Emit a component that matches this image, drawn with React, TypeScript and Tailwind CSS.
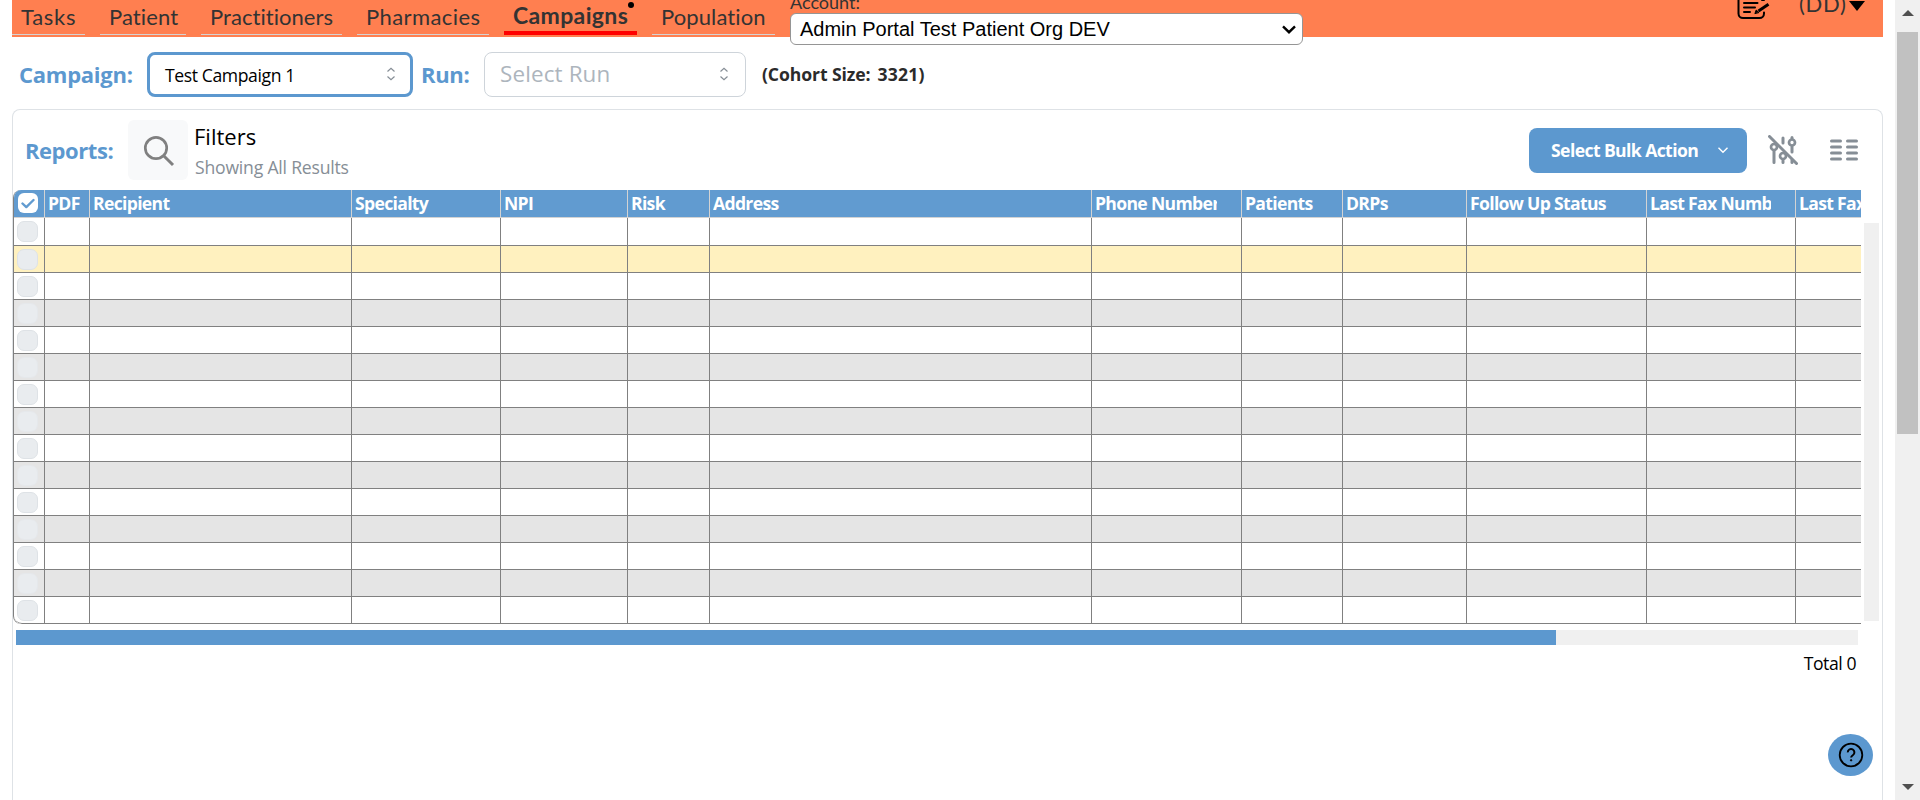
import type { ReactNode } from 'react';

const columns: { label: string; width: string }[] = [
  { label: 'PDF', width: 'w-[45px]' },
  { label: 'Recipient', width: 'w-[262px]' },
  { label: 'Specialty', width: 'w-[149px]' },
  { label: 'NPI', width: 'w-[127px]' },
  { label: 'Risk', width: 'w-[82px]' },
  { label: 'Address', width: 'w-[382px]' },
  { label: 'Phone Number', width: 'w-[150px]' },
  { label: 'Patients', width: 'w-[101px]' },
  { label: 'DRPs', width: 'w-[124px]' },
  { label: 'Follow Up Status', width: 'w-[180px]' },
  { label: 'Last Fax Number', width: 'w-[149px]' },
  { label: 'Last Fax Date', width: 'w-[149px]' },
];

const rows = Array.from({ length: 15 }, (_, i) => i);

function NavItem({ children, className }: { children: ReactNode; className: string }) {
  return (
    <a className={`h-[35px] shrink-0 border-b border-[#d3d3d3] pl-[9px] text-[22px] leading-[34px] whitespace-nowrap ${className}`}>
      {children}
    </a>
  );
}

function Sorter() {
  return (
    <svg width="10" height="14" viewBox="0 0 10 14" fill="none" stroke="#868e96" strokeWidth="1.2">
      <path d="M1.5 4.5 5 1.2 8.5 4.5M1.5 9.5 5 12.8 8.5 9.5" />
    </svg>
  );
}

function Header() {
  return (
    <header className="flex h-[37px] w-[1871px] items-start bg-[#ff7f50] font-['Lato',sans-serif] text-[#333]">
      <nav className="flex gap-[15px]">
        <NavItem className="w-[73px] tracking-[0.7px]">Tasks</NavItem>
        <NavItem className="w-[86px] tracking-[0.1px]">Patient</NavItem>
        <NavItem className="w-[141px] tracking-[0.05px]">Practitioners</NavItem>
        <NavItem className="w-[132px] tracking-[0.4px]">Pharmacies</NavItem>
        <a className="relative h-[35px] w-[133px] shrink-0 border-b-4 border-[#ff0000] pl-[9px] text-[23px] leading-[31px] font-bold tracking-[0.35px]">
          Campaigns
          <span className="absolute top-[2px] right-[3px] size-[6px] rounded-full bg-black" />
        </a>
        <NavItem className="w-[123px] tracking-[0.1px]">Population</NavItem>
      </nav>
      <div className="ml-[15px] flex w-[513px] flex-col">
        <span className="-mt-[9px] h-[22px] text-[18px] leading-[22px]">Account:</span>
        <div className="flex h-8 items-center justify-between rounded-md border border-[#959595] bg-white pr-[6px] pl-[9px] font-['Liberation_Sans',sans-serif] text-[20px] text-black">
          <span className="leading-6">Admin Portal Test Patient Org DEV</span>
          <svg width="14" height="9" viewBox="0 0 14 9" fill="none" stroke="#000" strokeWidth="2.4">
            <path d="M1 1.3 7 7.2 13 1.3" />
          </svg>
        </div>
      </div>
      <div className="ml-auto flex pr-[18px]">
        <svg width="34" height="20" viewBox="0 0 34 20" fill="none" stroke="#000" strokeWidth="2" strokeLinecap="round">
          <path d="M1.500 0v13.500a4.500 4.500 0 0 0 4.500 4.500h16.500a4.500 4.500 0 0 0 4.500-4.500v-1M25 0h2" />
          <path d="M7 3h13.500M7 7.500h11M7 12h6" />
          <path d="M21.500 11 31.500 4.300" strokeWidth="3" strokeLinecap="butt" />
          <path d="m18 13.300 1.200-3.300 2.500 2.300z" fill="#000" strokeWidth="1" />
        </svg>
        <span className="ml-[28px] -mt-[10px] w-[45px] text-[22px] leading-[28px] tracking-[0.7px]">(DD)</span>
        <svg className="ml-[5px] mt-[1px]" width="16" height="10" viewBox="0 0 16 10">
          <path d="M0 0h16L8 10z" />
        </svg>
      </div>
    </header>
  );
}

function CampaignBar() {
  return (
    <section className="flex h-[72px] items-center pl-[7px] text-[22px]">
      <h2 className="w-[128px] pt-[2px] font-bold tracking-[-0.25px] text-[#5c98cf]">Campaign:</h2>
      <div className="mt-[2px] flex h-[45px] w-[266px] items-center justify-between rounded-lg border-[3px] border-[#5c98cf] pr-[14px] pl-[15px] text-[17.6px] tracking-[-0.4px] text-black">
        <span className="pt-[2px]">Test Campaign 1</span>
        <Sorter />
      </div>
      <h2 className="ml-[8px] w-[63px] pt-[2px] font-bold tracking-[-0.35px] text-[#5c98cf]">Run:</h2>
      <div className="mt-[2px] flex h-[45px] w-[262px] items-center justify-between rounded-lg border border-[#ced4da] pr-[16px] pl-[15px] text-[22.4px] tracking-[0.15px] text-[#adb5bd]">
        <span className="-mt-[1px]">Select Run</span>
        <Sorter />
      </div>
      <strong className="ml-[16px] flex gap-[7px] pt-[2px] text-[17.6px] tracking-[-0.1px] text-[#2b2b2b]">
        <span>(Cohort Size:</span>
        <span className="tracking-[0.2px]">3321)</span>
      </strong>
    </section>
  );
}

function Toolbar() {
  return (
    <div className="flex h-[80px] items-center pl-[12px]">
      <h2 className="w-[103px] text-[22px] font-bold tracking-[-0.45px] text-[#5c98cf]">Reports:</h2>
      <button className="flex size-[60px] items-center justify-center rounded-md bg-[#f8f9fa]">
        <svg width="34" height="34" viewBox="0 0 34 34" fill="none" stroke="#808080" strokeWidth="2.700">
          <circle cx="15" cy="15" r="10.700" />
          <path d="m22.700 22.700 9.300 9.300" strokeWidth="3" />
        </svg>
      </button>
      <div className="ml-[6px] flex flex-col pt-[4px]">
        <span className="h-[31px] text-[22px] leading-[31px] text-black">Filters</span>
        <span className="h-[31px] pl-px text-[17.6px] leading-[31px] tracking-[-0.2px] text-[#868e96]">Showing All Results</span>
      </div>
      <button className="ml-auto flex h-[45px] w-[218px] items-center rounded-lg bg-[#5c98cf] pl-[22px] text-left text-[17.6px] font-bold tracking-[-0.6px] text-white">
        <span className="w-[167px]">Select Bulk Action</span>
        <svg width="10" height="7" viewBox="0 0 10 7" fill="none" stroke="#fff" strokeWidth="1.400">
          <path d="M.5.8 5 5.300 9.500.8" />
        </svg>
      </button>
      <svg className="ml-[21px]" width="30" height="30" viewBox="0 0 30 30" fill="none" stroke="#868e96" strokeWidth="3" strokeLinecap="round">
        <path d="M6 16v11.500M15 3v5M15 25.500v2M24 12v5M24 2.500v1" />
        <g strokeWidth="2.700">
          <circle cx="6" cy="12" r="3" />
          <circle cx="15" cy="21" r="3" />
          <circle cx="24" cy="7.500" r="3" />
        </g>
        <path d="M24 25v2.500" />
        <path d="M1.500 1.500 28.500 28.500" strokeWidth="3" />
      </svg>
      <svg className="ml-[32px] mr-[24px]" width="28" height="22" viewBox="0 0 28 22" fill="none" stroke="#868e96" strokeWidth="3" strokeLinecap="round">
        <path d="M1.500 2h9M17.500 2h9M1.500 8h9M17.500 8h9M1.500 14h9M17.500 14h9M1.500 20h9M17.500 20h9" />
      </svg>
    </div>
  );
}

function Table() {
  return (
    <div className="flex h-[434px] justify-between pr-[3px]">
      <div className="w-[1848px] overflow-hidden rounded-l-lg border-l border-[#808080]">
        <div className="flex h-7 border-b border-[#d3d3d3] bg-[#619bd0]">
          <div className="flex w-[31px] shrink-0 justify-start border-r border-[#d3d3d3] pt-[3px] pl-[4px]">
            <span className="flex size-5 items-center justify-center rounded-md bg-white">
              <svg width="14" height="11" viewBox="0 0 14 11" fill="none" stroke="#619bd0" strokeWidth="2.400" strokeLinecap="round" strokeLinejoin="round">
                <path d="m1.500 5.500 3.800 3.600L12.500 2" />
              </svg>
            </span>
          </div>
          {columns.map((c) => (
            <div key={c.label} className={`${c.width} shrink-0 border-r border-[#d3d3d3] pl-[3px] ${c.label === 'PDF' ? '' : 'pr-[24px]'}`}>
              <div className="overflow-hidden text-[17.6px] leading-[27px] font-bold tracking-[-0.68px] whitespace-nowrap text-white">{c.label}</div>
            </div>
          ))}
        </div>
        <div className="overflow-hidden rounded-bl-lg">
          {rows.map((i) => (
            <div
              key={i}
              className={`flex border-b border-[#808080] ${i === 0 ? 'h-7' : 'h-[27px]'} ${i === 1 ? 'bg-[#fff1bf]' : i % 2 ? 'bg-[#e5e5e5]' : 'bg-white'} ${i === 14 ? 'rounded-bl-lg' : ''}`}
            >
              <div className="w-[31px] shrink-0 border-r border-[#808080] pt-[3px] pl-[3px]">
                <div className={`size-[21px] rounded-[7px] border bg-[#e9ecef] ${i % 2 && i > 1 ? 'border-[#e5e8eb]' : 'border-[#dee2e6]'}`} />
              </div>
              {columns.map((c) => (
                <div key={c.label} className={`${c.width} shrink-0 border-r border-[#808080]`} />
              ))}
            </div>
          ))}
        </div>
      </div>
      <div className="mt-[33px] h-[398px] w-[15px] bg-[#f0f0f0]" />
    </div>
  );
}

function PageScrollbar() {
  return (
    <aside className="flex w-[25px] flex-col items-center bg-[#f0f0f0]">
      <svg className="mt-[10px]" width="12" height="6" viewBox="0 0 12 6">
        <path d="M0 6h12L6 0z" fill="#505050" />
      </svg>
      <div className="mt-4 h-[402px] w-[21px] bg-[#c1c1c1]" />
      <svg className="mt-auto mb-[10px]" width="12" height="6" viewBox="0 0 12 6">
        <path d="M0 0h12L6 6z" fill="#505050" />
      </svg>
    </aside>
  );
}

export default function App() {
  return (
    <div className="relative flex h-[800px] w-[1920px] justify-between overflow-hidden bg-white font-['Open_Sans','Noto_Sans',sans-serif]">
      <main className="ml-3 flex w-[1871px] flex-col">
        <Header />
        <CampaignBar />
        <section className="h-[691px] rounded-t-lg border border-b-0 border-[#dee2e6]">
          <Toolbar />
          <Table />
          <div className="mt-[6px] ml-[3px] h-[15px] w-[1842px] bg-[#f0f0f0]">
            <div className="h-full w-[1540px] bg-[#5c98cf]" />
          </div>
          <p className="mt-[5px] pr-[26px] text-right text-[17.6px] leading-[27px] tracking-[-0.45px] text-black">Total 0</p>
        </section>
      </main>
      <PageScrollbar />
      <button className="absolute top-[734px] left-[1828px] flex h-[42px] w-[45px] items-center justify-center rounded-[50%] bg-[#5c98cf]">
        <svg width="26" height="26" viewBox="0 0 26 26" fill="none" stroke="#000" strokeWidth="1.800">
          <circle cx="13" cy="13" r="11.300" />
          <path d="M9.800 10.400a3.300 3.300 0 1 1 5.200 2.600c-1.200.8-1.900 1.300-1.900 2.600" strokeWidth="2" />
          <circle cx="13.100" cy="18.300" r=".7" fill="#000" strokeWidth="1" />
        </svg>
      </button>
    </div>
  );
}
